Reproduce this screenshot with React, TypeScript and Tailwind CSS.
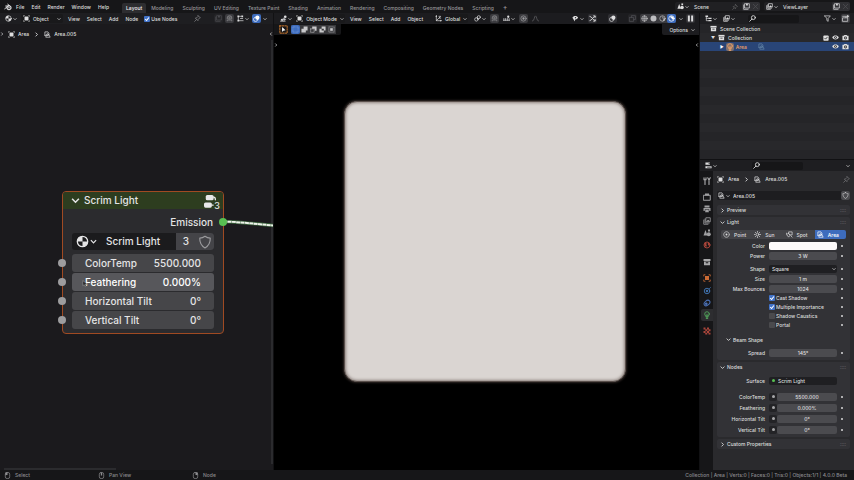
import React, { useState } from 'react';
import clsx from 'clsx';

type IconName =
  | 'blender' | 'material' | 'object' | 'pin' | 'magnet' | 'snap' | 'overlay' | 'light' | 'view3d' | 'axes'
  | 'link' | 'target' | 'falloff' | 'eyeArrow' | 'gizmo' | 'xray' | 'wire' | 'solid' | 'preview' | 'rendered'
  | 'pause' | 'scene' | 'copy' | 'close' | 'layers' | 'tree' | 'search' | 'filter' | 'newCollection'
  | 'collection' | 'eye' | 'camera' | 'bulb' | 'props' | 'tool' | 'render' | 'output' | 'world' | 'square'
  | 'physics' | 'constraint' | 'texture' | 'shield' | 'point' | 'sun' | 'spot' | 'group' | 'snapNode'
  | 'selNew' | 'selAdd' | 'selSub' | 'selInv' | 'selInt' | 'cursor' | 'mouseL' | 'mouseM' | 'mouseR';

const S = { fill: 'none', stroke: 'currentColor', strokeWidth: 1.6, strokeLinecap: 'round', strokeLinejoin: 'round' } as const;
const F = { fill: 'currentColor' } as const;

const icons: Record<IconName, React.ReactNode> = {
  blender: <><path {...S} strokeWidth={2} d="M1.5 11.5 9 5.5M3.5 6h6M7.5 2.5l5 4" /><circle {...S} strokeWidth={2.4} cx="10" cy="9.5" r="4" /><circle {...F} cx="10" cy="9.5" r="1.6" /></>,
  material: <><circle {...S} cx="8" cy="8" r="6.4" /><path {...F} d="M8 1.6A6.4 6.4 0 0 0 1.6 8H8zM8 8v6.4A6.4 6.4 0 0 0 14.4 8z" /></>,
  object: <><path {...F} d="M3.5 3.5h9v9h-9z" /><path {...S} strokeWidth={1} d="M1 3.5V1h2.5M12.5 1H15v2.5M15 12.500V15h-2.500M3.500 15H1v-2.500" /></>,
  pin: <path {...S} d="m9.5 1.5 5 5-2 .5-3 3-.5 3-6-6 3-.5 3-3zM5.500 10.500 1.500 14.500" />,
  magnet: <path {...S} strokeWidth={2.6} d="M3 8.500V7a5 5 0 0 1 10 0v1.500M3 11.500v1.500M13 11.500v1.500M6.500 12V7.500a1.500 1.500 0 0 1 3 0V12" />,
  snap: <><path {...F} d="M1 1h4v4H1zM1 11h4v4H1zM10 1h4v4h-4z" /><path {...S} d="M3 5v6M5 3h5M5 13h9M8 8h5" /></>,
  snapNode: <><path {...S} d="M1 12h14M2 12V8M6 12V8M10 12V8M14 12V8" /><circle {...F} cx="12" cy="4" r="2.6" /></>,
  overlay: <><circle {...F} cx="10" cy="6" r="4.800" /><circle {...S} cx="6" cy="10" r="4.800" /></>,
  light: <><path {...S} d="M2 10V2h7l3 5M2 10h3" /><circle {...S} cx="8" cy="8" r="2" /><path {...S} d="M5 10.500 4 14.200h10l-1.500-3.700z" /></>,
  view3d: <><path {...S} d="M1 14h11M3 10h10M5 14l3-7M9 14l2-7" /><circle {...F} cx="12" cy="4" r="3" /><circle {...F} cx="4" cy="11" r="2" /></>,
  axes: <><path {...S} d="M3 2v11h11M3 13l6-6" /><path {...F} d="M1 4 3 0l2 4zM12 11l4 2-4 2z" /><path {...S} d="M9 3h4l-4 4h4" /></>,
  link: <><circle {...S} cx="5.500" cy="10" r="4" /><circle {...S} cx="11" cy="5" r="3.500" /><circle {...F} cx="8" cy="8" r="1.600" /></>,
  target: <><circle {...S} cx="8" cy="8" r="6" /><circle {...F} cx="8" cy="8" r="2.600" /></>,
  falloff: <path {...S} d="M1 14c5 0 4-12 7-12s2 12 7 12" />,
  eyeArrow: <><path {...F} d="M1 6c2-5 11-5 13 0-2 3-4 4-7 4L6 15 3 9z" /><circle cx="8" cy="6" r="1.500" fill="#1c1c1f" /></>,
  gizmo: <path {...S} strokeWidth={2} d="M2 13C7 13 9 3 14 3M10.500 2H14v3.500M2 3c5 0 7 10 12 10M10.500 14H14v-3.500" />,
  xray: <path {...S} d="M1.500 5.500h9v9h-9zM5.500 5V1.500h9v9H11" />,
  wire: <><circle {...S} cx="8" cy="8" r="6.200" /><path {...S} strokeWidth={1.200} d="M2 8h12M8 2v12M8 2c-4 3-4 9 0 12M8 2c4 3 4 9 0 12" /></>,
  solid: <circle {...F} cx="8" cy="8" r="6.800" />,
  preview: <><circle {...S} cx="8" cy="8" r="6.200" /><path {...F} d="M8 2v6h6a6 6 0 0 1-6 6 6 6 0 0 0 2-6 6 6 0 0 0-2-6z" /></>,
  rendered: <><circle {...S} strokeWidth={1.800} cx="8" cy="8" r="6.200" /><path {...F} d="M5 3.500C9 2 14 5 13.500 9 12 12 9 10 8.500 8 8 6 4 6 5 3.500z" /></>,
  pause: <path {...F} d="M2 1h4.500v14H2zM9.500 1H14v14H9.500z" />,
  scene: <><path {...F} d="M5 2 9 13H1z" /><circle {...F} cx="11.500" cy="10.500" r="4" /><path {...F} d="M10 1h4v4h-4z" /></>,
  copy: <><path {...S} d="M1.500 4.500v10h10M4.500 1.500h10v10h-10z" /><path {...F} d="M7 1.500h4v5l-2-1.500-2 1.500z" /></>,
  close: <path {...S} d="m3 3 10 10M13 3 3 13" />,
  layers: <><path {...S} d="M1.500 6v8.500H10M4 4v8h8.500M6.500 1.500h8v8h-8z" /><path {...F} d="m7 9 3-4 4 4z" /></>,
  tree: <><path {...F} d="M1 1h6v3.500H1zM8 6h7v3H8zM8 11.500h7v3H8z" /><path {...S} d="M3 5v8h5M3 7.500h5" /></>,
  search: <><circle {...S} strokeWidth={2} cx="10" cy="6" r="4.500" /><path {...S} strokeWidth={2} d="m6.500 9.500-5 5" /></>,
  filter: <path {...S} d="M1.500 2h13L9.500 8v6.500l-3-2V8z" />,
  newCollection: <><path {...S} d="M2 6.500h11v8H2zM1.500 3H9v3" /><path {...S} strokeWidth={2} d="M13 .500v5M10.500 3h5" /></>,
  collection: <><path {...F} d="M1 2h14v4H1z" /><path {...F} fillRule="evenodd" d="M2 7h12v7.500H2zM5.500 8.500v2h5v-2z" /></>,
  eye: <><path {...F} d="M.500 8c3-6 12-6 15 0-3 6-12 6-15 0z" /><circle cx="8" cy="8" r="3" fill="#26262a" /><circle {...F} cx="8" cy="8" r="1.300" /></>,
  camera: <><path {...F} d="M1 4h3l1.500-2h5L12 4h3v10H1z" /><circle cx="8" cy="9" r="3.300" fill="#26262a" /><circle {...F} cx="8" cy="9" r="1.500" /></>,
  bulb: <><circle {...S} cx="8" cy="6" r="4.600" /><path {...S} d="M6 10v2.500h4V10M6.500 15h3M8 10V6.500" /></>,
  props: <><path {...F} d="M1 1h10v5H1zM1 9.500h14v5H1z" /><path d="M8 3.500h6M5 12h8" stroke="#1c1c1f" strokeWidth="1.500" /></>,
  tool: <><path {...S} strokeWidth={2.200} d="M4 7v8M2 1.500v4h4v-4" /><path {...S} strokeWidth={2.200} d="M12 15V7M9.500 1.500 12 6l2.500-4.500" /></>,
  render: <><path {...S} strokeWidth={2} d="M1.500 4.500h13v10h-13z" /><path {...F} d="M4 1h8v4H4z" /></>,
  output: <><path {...F} d="M3 1h10v4H3zM1 6h14v6H1z" /><path d="M4 9h8v6H4z" fill="currentColor" stroke="#161618" /></>,
  world: <><circle {...S} strokeWidth={2} cx="8" cy="8" r="6" /><path {...F} d="M3 4c3-2 5 0 4 2s2 3 0 5-5-3-4-7zM10 3c4 2 4 5 2 6s-3-3-2-6z" /></>,
  square: <><path {...F} d="M4 4h8v8H4z" /><path {...S} d="M1.500 4V1.500H4M12 1.500h2.500V4M14.500 12v2.500H12M4 14.500H1.500V12" /></>,
  physics: <><circle {...S} strokeWidth={2} cx="8" cy="8" r="5.500" /><circle {...F} cx="8" cy="8" r="2.500" /><path {...S} d="m12 4 3-3" /></>,
  constraint: <><ellipse {...S} strokeWidth={2} cx="8" cy="8" rx="6.500" ry="4.500" transform="rotate(-40 8 8)" /><circle {...F} cx="6.500" cy="9.500" r="2.700" /></>,
  texture: <path {...F} d="M1 1h4v4H1zM8 1h4v4H8zM4.500 4.500h4v4h-4zM11 4.500h4v4h-4zM1 8h4v4H1zM8 8h4v4H8zM4.500 11.500h4v3.500h-4zM11 11.500h4v3.500h-4z" />,
  shield: <path {...S} strokeWidth={1.300} d="M8 1.500c2 1.500 4 2 6 2C14.200 9 12 12.500 8 14.800 4 12.500 1.800 9 2 3.500c2 0 4-.500 6-2z" />,
  point: <><circle {...S} cx="8" cy="8" r="6.300" strokeDasharray="3 2" /><circle {...F} cx="8" cy="8" r="2.200" /></>,
  sun: <><circle {...S} cx="8" cy="8" r="3.200" /><path {...S} d="M8 1v1.500M8 13.500V15M1 8h1.500M13.500 8H15M3 3l1 1M12 12l1 1M13 3l-1 1M4 12l-1 1" /></>,
  spot: <><path {...S} d="M6 6V2h8v7h-4zM2 9l4 5 4-5-4-3z" /><path {...S} d="M1 5v2M12 12l2 2" /></>,
  group: <><rect {...F} x="2" y="0" width="9" height="6" rx="1.800" /><rect {...F} x="0" y="8.500" width="9" height="6" rx="1.800" /><path {...S} strokeWidth={1.500} d="M11 2.500q2 0 2 3M9 11.500h1.500" /></>,
  selNew: <rect x="2" y="2" width="12" height="12" fill="#3f6fc0" stroke="#a9c3f2" strokeWidth="1" strokeDasharray="2 1" />,
  selAdd: <path {...F} d="M6 1h9v9h-4v5H1V6h5z" />,
  selSub: <><path {...F} d="M5 1h10v10h-4V6H5z" /><path {...S} strokeWidth={1} d="M1.500 6.500h8v8h-8z" strokeDasharray="2 1" /></>,
  selInv: <path {...F} fillRule="evenodd" d="M6 1h9v9h-4v5H1V6h5zM6 6v4h5V6z" />,
  selInt: <><path {...F} d="M5 5h6v6H5z" /><path {...S} strokeWidth={1} d="M2 2h12v12H2z" strokeDasharray="2 2" /></>,
  cursor: <><rect x="1.500" y="1.500" width="13" height="13" {...S} stroke="#d98030" strokeDasharray="2.500 2" /><path fill="#fff" d="M5.500 3.500v9l2-2.500 4-.500z" /></>,
  mouseL: <><rect {...S} x="3" y="1" width="10" height="14" rx="4" /><path {...F} d="M3 1h5v6H3z" /></>,
  mouseM: <><rect {...S} x="3" y="1" width="10" height="14" rx="4" /><path {...F} d="M6.500 2h3v6h-3z" /></>,
  mouseR: <><rect {...S} x="3" y="1" width="10" height="14" rx="4" /><path {...F} d="M8 1h5v6H8z" /></>,
};

const Icon: React.FC<{ name: IconName; className?: string }> = ({ name, className = 'size-[7px]' }) => (
  <svg viewBox="0 0 16 16" className={clsx('shrink-0', className)} aria-hidden="true">
    {icons[name]}
  </svg>
);

const Chevron: React.FC<{ dir?: 'down' | 'right' | 'left'; className?: string }> = ({ dir = 'down', className = 'size-[4px]' }) => (
  <svg viewBox="0 0 8 8" className={clsx('shrink-0', className, dir === 'right' && '-rotate-90', dir === 'left' && 'rotate-90')} aria-hidden="true">
    <path d="m1 2.500 3 3 3-3" fill="none" stroke="currentColor" strokeWidth="1.400" />
  </svg>
);

// Icon button, optionally with a drop-down chevron
const IconButton: React.FC<{ icon: IconName; label: string; chevron?: boolean; className?: string }> = ({ icon, label, chevron, className }) => (
  <button aria-label={label} className={clsx('flex h-[9px] shrink-0 items-center justify-center gap-px rounded-[2px] px-px', className)}>
    <Icon name={icon} />
    {chevron && <Chevron />}
  </button>
);

const Menu: React.FC<{ items: string[] }> = ({ items }) => (
  <nav className="flex shrink-0 items-center gap-[7px]">
    {items.map((item) => (
      <button key={item}>{item}</button>
    ))}
  </nav>
);

const workspaces = ['Layout', 'Modeling', 'Sculpting', 'UV Editing', 'Texture Paint', 'Shading', 'Animation', 'Rendering', 'Compositing', 'Geometry Nodes', 'Scripting'];

const TopBar: React.FC = () => {
  const [active, setActive] = useState('Layout');
  return (
    <header className="flex h-[13px] shrink-0 items-center bg-[#161618]">
      <Icon name="blender" className="mr-[4px] ml-[4px] size-[8px]" />
      <Menu items={['File', 'Edit', 'Render', 'Window', 'Help']} />
      <nav className="ml-[13px] flex items-end gap-px self-end text-[#98989b]">
        {workspaces.map((name) => (
          <button
            key={name}
            onClick={() => setActive(name)}
            className={clsx('h-[10px] rounded-t-[2px] px-[4px]', active === name && 'bg-[#2d2d30] text-[#f4f4f4]')}
          >
            {name}
          </button>
        ))}
        <button aria-label="Add workspace" className="h-[10px] px-[4px] text-[7px]">+</button>
      </nav>
      <div className="mr-[4px] ml-auto flex gap-[4px]">
        <div className="flex h-[9px] w-[85px] items-center gap-[4px] rounded-[2px] bg-[#202023] pl-px">
          <IconButton icon="scene" label="Browse scene" chevron />
          <span className="flex-1">Scene</span>
          <Icon name="pin" className="size-[6px] text-[#69696c]" />
          <div className="flex rounded-[2px] bg-[#303034]">
            <IconButton icon="copy" label="New scene" />
            <IconButton icon="close" label="Remove scene" className="text-[#505054]" />
          </div>
        </div>
        <div className="flex h-[9px] w-[86px] items-center gap-[4px] rounded-[2px] bg-[#202023] pl-px">
          <IconButton icon="layers" label="Browse view layer" chevron />
          <span className="flex-1">ViewLayer</span>
          <div className="flex rounded-[2px] bg-[#303034]">
            <IconButton icon="copy" label="New view layer" />
            <IconButton icon="close" label="Remove view layer" className="text-[#505054]" />
          </div>
        </div>
      </div>
    </header>
  );
};

const nodeSockets = [
  { label: 'ColorTemp', value: '5500.000' },
  { label: 'Feathering', value: '0.000%' },
  { label: 'Horizontal Tilt', value: '0°' },
  { label: 'Vertical Tilt', value: '0°' },
];

const ScrimNode: React.FC = () => (
  <article className="absolute top-[167px] left-[62px] w-[162px] rounded-[4px] border border-[#a04a22] bg-[#2b2b2e] pb-[4px] text-[10px] leading-[18px] text-[#e4e4e5]">
    <h2 className="flex h-[17px] items-center rounded-t-[3px] bg-[#2d3d1f] pl-[8px] leading-[17px]">
      <Chevron className="mr-[4px] size-[9px]" />
      Scrim Light
      <span className="relative mr-[4px] ml-auto">
        <Icon name="group" className="block size-[16px] pt-[2px] text-[#e8e8e8]" />
        <span className="absolute -right-px -bottom-px text-[9px] leading-[8px]">3</span>
      </span>
    </h2>
    <div className="relative mt-[4px] pr-[10px] text-right">
      Emission
      <span className="absolute top-[5px] -right-[4px] size-[8px] rounded-full bg-[#58c052]" />
    </div>
    <div className="mx-[9px] mt-[2px] flex h-[17px] items-center overflow-hidden rounded-[3px] bg-[#1b1b1d] leading-[17px]">
      <button aria-label="Browse node tree" className="flex h-full items-center gap-px pr-[4px] pl-[4px]">
        <Icon name="material" className="size-[13px]" />
        <Chevron className="size-[7px]" />
      </button>
      <input aria-label="Node tree name" defaultValue="Scrim Light" className="w-0 flex-1 bg-transparent pl-[5px]" />
      <div className="flex h-full items-center gap-[9px] bg-[#444448] pr-[2px] pl-[7px]">
        <button aria-label="Number of users">3</button>
        <button aria-label="Fake user"><Icon name="shield" className="block size-[14px] text-[#9a9a9d]" /></button>
      </div>
    </div>
    <div className="mt-[4px] flex flex-col gap-px">
      {nodeSockets.map((socket, i) => (
        <label key={socket.label} className="relative flex px-[9px]">
          <span className="absolute top-[5px] -left-[5px] size-[8px] rounded-full bg-[#9d9d9f]" />
          <span className={clsx('flex h-[18px] w-full rounded-[3px] px-[13px]', i === 1 ? 'bg-[#57575b] text-white' : 'bg-[#464649]')}>
            {socket.label}
            <input defaultValue={socket.value} className="w-0 flex-1 bg-transparent text-right" />
          </span>
        </label>
      ))}
    </div>
    <svg viewBox="0 0 8 10" className="absolute top-[87px] left-[19px] h-[9px] w-[6px]" aria-hidden="true">
      <path d="m1 1 0 7 2-1.500 1 2.500 1.500-1-1-2H7z" fill="#2a2a2c" stroke="#a0a0a0" strokeWidth=".700" />
    </svg>
  </article>
);

const ShaderEditor: React.FC = () => (
  <section className="flex w-[32%] shrink-0 flex-col bg-[#1b1a1d]">
    <div className="flex h-[11px] shrink-0 items-center bg-[#1e1e21] pl-[4px]">
      <IconButton icon="material" label="Editor type" chevron />
      <button className="ml-[3px] flex h-[9px] w-[42px] items-center gap-[3px] rounded-[2px] bg-[#19191b] px-[2px]">
        <Icon name="object" />
        Object
        <Chevron className="ml-auto size-[4px]" />
      </button>
      <div className="ml-[5px]"><Menu items={['View', 'Select', 'Add', 'Node']} /></div>
      <Checkbox label="Use Nodes" checked className="ml-[6px]" />
      <Icon name="pin" className="ml-auto size-[7px] text-[#8a8a8d]" />
      <div className="mr-[6px] ml-[13px] flex items-center gap-[2px]">
        <IconButton icon="copy" label="Parent node tree" className="bg-[#252528] text-[#4c4c50]" />
        <IconButton icon="magnet" label="Snap" className="bg-[#3b3b3f] text-[#77777a]" />
        <IconButton icon="snap" label="Snap to" chevron />
        <IconButton icon="overlay" label="Overlays" className="bg-[#3d6cbd] text-white" />
        <Chevron />
      </div>
    </div>
    <div className="relative flex-1 overflow-hidden">
      <div className="flex items-center gap-[3px] pt-[6px]">
        <Chevron dir="right" className="mr-px size-[4px]" />
        <Icon name="object" />
        <span>Area</span>
        <Chevron dir="right" className="mx-[2px] size-[5px]" />
        <Icon name="light" />
        <span>Area.005</span>
        <Chevron dir="left" className="ml-auto size-[4px]" />
      </div>
      <div className="absolute right-0 bottom-[6px] top-[16px] w-[2px] bg-[#2b2b2e]" />
      <svg viewBox="0 0 51 8" className="absolute top-[196px] left-[223px] h-[8px] w-[51px]" aria-hidden="true">
        <path d="M0 1.500C18 2 32 4 51 5.500" fill="none" stroke="#38603a" strokeWidth="3.500" />
        <path d="M0 1.500C18 2 32 4 51 5.500" fill="none" stroke="#eef3ea" strokeWidth="2" strokeDasharray="4 .400" />
      </svg>
      <ScrimNode />
      <div className="absolute bottom-0 left-[4px] h-[2px] w-[41%] bg-[#2b2b2e]" />
    </div>
  </section>
);

const Checkbox: React.FC<{ label: string; checked?: boolean; className?: string }> = ({ label, checked, className }) => (
  <label className={clsx('flex shrink-0 items-center gap-px', className)}>
    <span className="relative flex size-[6px]">
      <input type="checkbox" defaultChecked={checked} className="peer size-[6px] appearance-none rounded-[1px] bg-[#4a4a4d] checked:bg-[#4273c8]" />
      <svg viewBox="0 0 8 8" className="pointer-events-none absolute inset-0 hidden peer-checked:block" aria-hidden="true">
        <path d="m1.500 4 2 2 3-4" fill="none" stroke="#fff" strokeWidth="1.400" />
      </svg>
    </span>
    {label}
  </label>
);

const Viewport: React.FC = () => (
  <section className="relative ml-px flex min-w-0 flex-1 items-center justify-center bg-black pr-[4px]">
    {/* area light seen straight on */}
    <div className="aspect-square w-[67%] rounded-[13px] border border-[#5a504c] bg-[#dad5d2] shadow-[inset_0_0_3px_1px_#8d827d,0_0_2px_1px_#2c2522]" />
    <div className="absolute inset-x-0 top-0">
      <div className="flex h-[11px] items-center bg-[#1c1c1f] pl-[5px]">
        <IconButton icon="view3d" label="Editor type" chevron />
        <button className="ml-[2px] flex h-[9px] items-center gap-[3px] rounded-[2px] bg-[#19191b] px-px">
          <Icon name="object" />
          Object Mode
          <Chevron />
        </button>
        <div className="ml-[5px]"><Menu items={['View', 'Select', 'Add', 'Object']} /></div>
        <button className="ml-[11px] flex h-[9px] items-center gap-[3px] rounded-[2px] bg-[#19191b] px-px">
          <Icon name="axes" />
          Global
          <Chevron />
        </button>
        <div className="ml-[5px] flex items-center gap-[3px]">
          <IconButton icon="link" label="Pivot point" chevron />
          <IconButton icon="magnet" label="Snap" className="bg-[#3b3b3f] text-[#77777a]" />
          <IconButton icon="snapNode" label="Snap to" chevron />
          <IconButton icon="target" label="Proportional editing" className="bg-[#3b3b3f] text-[#a0a0a3]" />
          <IconButton icon="falloff" label="Falloff" className="text-[#66666a]" />
        </div>
        <div className="mr-[4px] ml-auto flex items-center gap-[3px]">
          <IconButton icon="eyeArrow" label="Visibility" chevron />
          <IconButton icon="gizmo" label="Gizmos" className="bg-[#303034]" />
          <IconButton icon="overlay" label="Overlays" className="ml-[8px] bg-[#303034]" />
          <IconButton icon="xray" label="X-ray" className="ml-[8px] bg-[#252528] text-[#55555a]" />
          <div className="flex rounded-[2px] bg-[#3b3b3f] text-[#bdbdc0]">
            <IconButton icon="wire" label="Wireframe" />
            <IconButton icon="solid" label="Solid" />
            <IconButton icon="preview" label="Material preview" />
            <IconButton icon="rendered" label="Rendered" className="bg-[#3d6cbd] text-white" />
          </div>
          <Chevron />
          <IconButton icon="pause" label="Pause render" className="bg-[#303034]" />
        </div>
      </div>
      <div className="flex items-start justify-between">
        <div className="flex h-[11px] items-center gap-[3px] rounded-br-[2px] bg-[#161618] pr-[5px] pl-[5px]">
          <button aria-label="Tweak tool"><Icon name="cursor" className="block size-[9px]" /></button>
          <div className="flex bg-[#38383b] text-[#c8c8ca]">
            <IconButton icon="selNew" label="Set selection" className="bg-[#3d6cbd]" />
            <IconButton icon="selAdd" label="Extend selection" />
            <IconButton icon="selSub" label="Subtract selection" />
            <IconButton icon="selInv" label="Invert selection" />
            <IconButton icon="selInt" label="Intersect selection" />
          </div>
        </div>
        <button className="flex h-[11px] items-center gap-[3px] rounded-bl-[2px] bg-[#1c1c1f] pr-[4px] pl-[7px]">
          Options
          <Chevron />
        </button>
      </div>
      <div className="flex justify-between pt-[8px]">
        <Chevron dir="right" />
        <Chevron dir="left" />
      </div>
    </div>
  </section>
);

const Outliner: React.FC = () => (
  <section className="flex h-[32%] shrink-0 flex-col bg-[#252528]">
    <div className="flex h-[11px] shrink-0 items-center gap-[4px] bg-[#1e1e21] pr-[4px] pl-[4px]">
      <IconButton icon="tree" label="Editor type" chevron />
      <IconButton icon="layers" label="Display mode" chevron />
      <SearchBox className="ml-[8px]" />
      <IconButton icon="filter" label="Filter" chevron className="ml-auto" />
      <IconButton icon="newCollection" label="New collection" className="bg-[#3b3b3f]" />
    </div>
    <ul className="flex-1 bg-[repeating-linear-gradient(#252528_0_9px,#28282b_9px_18px)]">
      <li className="flex h-[9px] items-center gap-[3px] pl-[10px]">
        <Icon name="collection" />
        Scene Collection
      </li>
      <li className="flex h-[9px] items-center gap-[3px] pr-[5px] pl-[11px]">
        <span className="text-[4px]">▼</span>
        <Icon name="collection" />
        Collection
        <span className="ml-auto flex items-center gap-[3px]">
          <svg viewBox="0 0 16 16" className="size-[6px]" aria-hidden="true">
            <rect x="1" y="1" width="14" height="14" rx="2" fill="#e0e0e0" />
            <path d="m4 8 3 3 5-6" fill="none" stroke="#222" strokeWidth="2" />
          </svg>
          <Icon name="eye" />
          <Icon name="camera" />
        </span>
      </li>
      <li className="flex h-[9px] items-center gap-[2px] bg-[#294577] pr-[5px] pl-[20px] text-[#f0a267]">
        <span className="text-[4px] text-white">▶</span>
        <Icon name="bulb" className="size-[8px] rounded-[2px] bg-[#80706c]" />
        Area
        <Icon name="light" className="ml-[9px] size-[7px] text-[#6487a8]" />
        <span className="ml-auto flex gap-[3px] text-[#e0e0e0]">
          <Icon name="eye" />
          <Icon name="camera" />
        </span>
      </li>
    </ul>
  </section>
);

const SearchBox: React.FC<{ className?: string }> = ({ className }) => (
  <label className={clsx('flex h-[8px] w-[51px] items-center rounded-[2px] bg-[#161618] pl-px', className)}>
    <Icon name="search" />
    <input type="search" aria-label="Search" className="w-0 flex-1 bg-transparent" />
  </label>
);

const tabs: { icon: IconName; label: string; className: string }[] = [
  { icon: 'tool', label: 'Tool', className: 'mb-[4px] text-[#b0b0b2]' },
  { icon: 'render', label: 'Render', className: 'text-[#a0a0a2]' },
  { icon: 'output', label: 'Output', className: 'text-[#a0a0a2]' },
  { icon: 'layers', label: 'View Layer', className: 'text-[#a0a0a2]' },
  { icon: 'scene', label: 'Scene', className: 'text-[#a0a0a2]' },
  { icon: 'world', label: 'World', className: 'mb-[5px] text-[#a8453a]' },
  { icon: 'collection', label: 'Collection', className: 'mb-[4px] text-[#a8a8aa]' },
  { icon: 'square', label: 'Object', className: 'mb-px text-[#cc6b35]' },
  { icon: 'physics', label: 'Physics', className: 'text-[#3f6fa8]' },
  { icon: 'constraint', label: 'Constraints', className: 'text-[#4a70b5]' },
  { icon: 'bulb', label: 'Data', className: 'mb-[4px] bg-[#2d2d30] text-[#55b060]' },
  { icon: 'texture', label: 'Texture', className: 'text-[#a8453a]' },
];

const Row: React.FC<{ label: string; dot?: boolean; socket?: boolean; className?: string; children: React.ReactNode }> = ({ label, dot = true, socket, className, children }) => (
  <div className={clsx('flex h-[9px] items-center pr-[3px]', className)}>
    <label className="flex min-w-0 flex-1 items-center">
      <span className="w-[52px] shrink-0 pr-[4px] text-right">{label}</span>
      {socket && (
        <span className="flex size-[8px] shrink-0 items-center justify-center rounded-[2px] bg-[#232326]">
          <span className="size-[3px] rounded-full bg-[#a8a8aa]" />
        </span>
      )}
      {children}
    </label>
    <span className="flex w-[10px] justify-center">{dot && <span className="size-[2px] rounded-full bg-[#d8d8da]" />}</span>
  </div>
);

const field = 'h-[8px] min-w-0 flex-1 rounded-[2px] bg-[#4b4b4f] text-center';

const Panel: React.FC<{ title: string; open?: boolean; children?: React.ReactNode }> = ({ title, open, children }) => (
  <section className={clsx('rounded-[2px] bg-[#323236]', open && 'pb-[3px]')}>
    <h3 className="flex h-[10px] items-center gap-[2px] pr-[4px] pl-[3px]">
      <Chevron dir={open ? 'down' : 'right'} className="size-[5px]" />
      {title}
      <span className="ml-auto text-[#66666a]">::::</span>
    </h3>
    {children}
  </section>
);

const lightTypes: { label: string; icon: IconName }[] = [
  { label: 'Point', icon: 'point' },
  { label: 'Sun', icon: 'sun' },
  { label: 'Spot', icon: 'spot' },
  { label: 'Area', icon: 'light' },
];

const options = [
  { label: 'Cast Shadow', checked: true },
  { label: 'Multiple Importance', checked: true },
  { label: 'Shadow Caustics', checked: false },
  { label: 'Portal', checked: false },
];

const Properties: React.FC = () => {
  const [lightType, setLightType] = useState('Area');
  return (
    <section className="mt-px flex min-h-0 flex-1 flex-col bg-[#2a2a2d]">
      <div className="flex h-[11px] shrink-0 items-center bg-[#1e1e21] pr-[4px] pl-[4px]">
        <IconButton icon="props" label="Editor type" chevron />
        <SearchBox className="ml-[34px]" />
        <Chevron className="ml-auto size-[4px]" />
      </div>
      <div className="flex min-h-0 flex-1">
        <nav className="flex w-[13px] shrink-0 flex-col items-center bg-[#161618] pt-[4px]">
          {tabs.map((tab) => (
            <button
              key={tab.icon}
              aria-label={tab.label}
              className={clsx('flex h-[12px] w-[12px] shrink-0 items-center justify-center rounded-l-[2px]', tab.className)}
            >
              <Icon name={tab.icon} className="size-[8px]" />
            </button>
          ))}
        </nav>
        <div className="min-w-0 flex-1 pr-[4px] pl-[4px]">
          <div className="flex h-[16px] items-center gap-[4px]">
            <Icon name="object" />
            <span>Area</span>
            <Chevron dir="right" className="mx-px size-[5px]" />
            <Icon name="light" />
            <span>Area.005</span>
            <Icon name="pin" className="ml-auto size-[7px] text-[#77777a]" />
          </div>
          <div className="mt-[4px] flex h-[9px] items-center rounded-[2px] bg-[#1d1d20]">
            <IconButton icon="light" label="Browse light data" chevron />
            <input aria-label="Light data name" defaultValue="Area.005" className="w-0 flex-1 bg-transparent pl-[2px]" />
            <IconButton icon="shield" label="Fake user" className="bg-[#4b4b4f]" />
          </div>
          <div className="mt-[5px] flex flex-col gap-[2px]">
            <Panel title="Preview" />
            <Panel title="Light" open>
              <div className="mt-[3px] flex h-[9px] pr-[4px] pl-[4px]">
                {lightTypes.map(({ label, icon }) => (
                  <button
                    key={label}
                    onClick={() => setLightType(label)}
                    className={clsx('flex flex-1 items-center gap-[4px] pl-[2px] first:rounded-l-[2px] last:rounded-r-[2px]', lightType === label ? 'bg-[#3d6cbd] text-white' : 'bg-[#434347]')}
                  >
                    <Icon name={icon} />
                    {label}
                  </button>
                ))}
              </div>
              <div className="mt-[2px] flex flex-col gap-px">
                <Row label="Color">
                  <input defaultValue="" className="h-[8px] min-w-0 flex-1 rounded-[2px] bg-[#fdfafa]" />
                </Row>
                <Row label="Power"><input defaultValue="3 W" className={field} /></Row>
                <Row label="Shape" className="mt-[3px]">
                  <span className="relative flex min-w-0 flex-1 items-center">
                    <select className="h-[8px] w-full appearance-none rounded-[2px] bg-[#1f1f22] pl-[3px] leading-[8px]">
                      <option>Square</option>
                    </select>
                    <Chevron className="pointer-events-none absolute right-px size-[4px]" />
                  </span>
                </Row>
                <Row label="Size"><input defaultValue="1 m" className={field} /></Row>
                <Row label="Max Bounces"><input defaultValue="1024" className={field} /></Row>
              </div>
              <div>
                {options.map((option) => (
                  <div key={option.label} className="flex h-[9px] items-center pr-[3px] pl-[52px]">
                    <Checkbox label={option.label} checked={option.checked} />
                    <span className="ml-auto flex w-[10px] justify-center"><span className="size-[2px] rounded-full bg-[#d8d8da]" /></span>
                  </div>
                ))}
              </div>
              <h4 className="mt-[6px] mb-[4px] flex h-[9px] items-center gap-[2px] pl-[9px]">
                <Chevron className="size-[5px]" />
                Beam Shape
              </h4>
              <Row label="Spread"><input defaultValue="145°" className={field} /></Row>
            </Panel>
            <Panel title="Nodes" open>
              <Row label="Surface" dot={false} className="mt-[4px]">
                <span className="flex h-[8px] min-w-0 flex-1 items-center gap-[3px] rounded-[2px] bg-[#1f1f22] pl-[3px]">
                  <span className="size-[3px] rounded-full bg-[#58c052]" />
                  <input defaultValue="Scrim Light" className="w-0 flex-1 bg-transparent" />
                </span>
              </Row>
              <div className="mt-[7px] flex flex-col gap-[2px]">
                {nodeSockets.map((socket) => (
                  <Row key={socket.label} label={socket.label} socket>
                    <input defaultValue={socket.value} className={field} />
                  </Row>
                ))}
              </div>
            </Panel>
            <Panel title="Custom Properties" />
          </div>
        </div>
      </div>
    </section>
  );
};

const StatusBar: React.FC = () => (
  <footer className="flex h-[10px] shrink-0 items-center bg-[#161618] pr-[7px] pl-[4px] text-[#8c8c8f]">
    <span className="flex w-[94px] items-center gap-[4px]"><Icon name="mouseL" />Select</span>
    <span className="flex w-[94px] items-center gap-[4px]"><Icon name="mouseM" />Pan View</span>
    <span className="flex items-center gap-[4px]"><Icon name="mouseR" />Node</span>
    <span className="ml-auto">Collection | Area | Verts:0 | Faces:0 | Tris:0 | Objects:1/1 | 4.0.0 Beta</span>
  </footer>
);

const App: React.FC = () => (
  <div className="flex h-screen flex-col overflow-hidden bg-[#111113] font-['Inter',sans-serif] text-[5px] leading-[8px] font-medium whitespace-nowrap text-[#dededf]">
    <TopBar />
    <main className="flex min-h-0 flex-1">
      <ShaderEditor />
      <Viewport />
      <aside className="ml-px flex w-[154px] shrink-0 flex-col">
        <Outliner />
        <Properties />
      </aside>
    </main>
    <StatusBar />
  </div>
);

export default App;
